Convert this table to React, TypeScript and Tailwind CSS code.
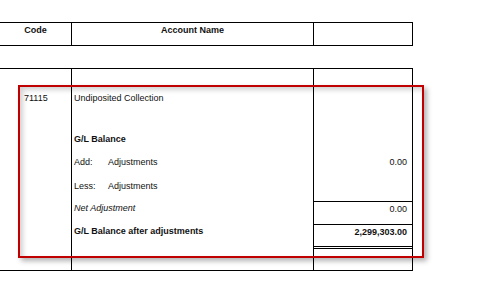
import React from "react";

const font = { fontFamily: '"Liberation Sans", Arial, sans-serif' };

export default function App() {
  return (
    <div className="relative w-[482px] h-[286px] bg-white text-[9px] leading-[11px] text-[#111]" style={font}>
      <div className="pt-[22px]">
        {/* Header table */}
        <div className="flex w-[413px] h-[24px] border-y border-r border-black">
          <div className="w-[72px] border-r border-black text-center font-bold pt-[2px]">Code</div>
          <div className="w-[242px] border-r border-black text-center font-bold pt-[2px]">Account Name</div>
          <div className="flex-1" />
        </div>

        {/* Body table */}
        <div className="mt-[22px] flex w-[413px] h-[203px] border-y border-r border-black">
          <div className="w-[72px] border-r border-black pl-[24px] pt-[24px]">71115</div>
          <div className="w-[242px] border-r border-black pl-[2px] flex flex-col">
            <div className="h-[58px] pt-[24px]">Undiposited Collection</div>
            <div className="h-[23px] pt-[7px] font-bold">G/L Balance</div>
            <div className="h-[23px] pt-[7px] flex">
              <span className="w-[34px]">Add:</span>
              <span>Adjustments</span>
            </div>
            <div className="h-[28px] pt-[8px] flex">
              <span className="w-[34px]">Less:</span>
              <span>Adjustments</span>
            </div>
            <div className="h-[23px] pt-[2px] italic">Net Adjustment</div>
            <div className="h-[22px] pt-[2px] font-bold">G/L Balance after adjustments</div>
          </div>
          <div className="flex-1 flex flex-col text-right pr-[5px]">
            <div className="h-[58px]" />
            <div className="h-[23px]" />
            <div className="h-[23px] pt-[7px]">0.00</div>
            <div className="h-[28px]" />
            <div className="h-[23px] border-t border-black pt-[2px] -mr-[5px] pr-[5px]">0.00</div>
            <div className="h-[22px] border-t border-black pt-[2px] font-bold -mr-[5px] pr-[5px]">2,299,303.00</div>
            <div className="flex-1 border-t border-black -mr-[5px]">
              <div className="mt-[1px] border-t border-black" />
            </div>
          </div>
        </div>
      </div>

      {/* Red highlight box */}
      <div className="absolute left-[18px] top-[85px] w-[406px] h-[173px] border-2 border-[#c00000] shadow-[3px_3px_5px_rgba(0,0,0,0.3),inset_3px_3px_5px_rgba(0,0,0,0.18)]" />
    </div>
  );
}
